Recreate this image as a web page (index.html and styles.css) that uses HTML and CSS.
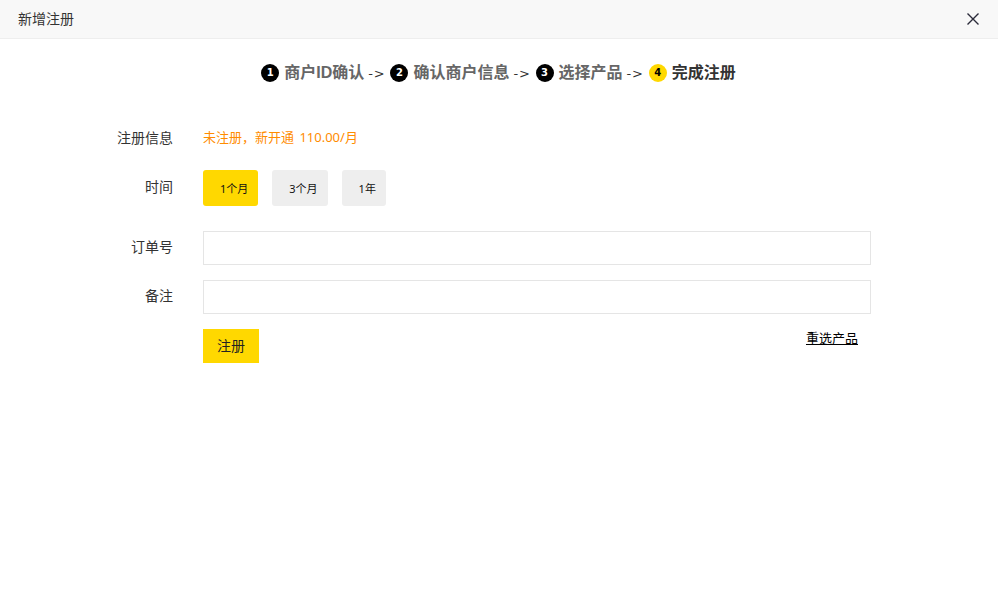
FILE: index.html
```html
<!DOCTYPE html>
<html lang="en">
<head>
    <meta charset="UTF-8">
    <meta name="viewport" content="width=device-width, initial-scale=1.0">
    <title>新增注册</title>
    <link rel="stylesheet" href="styles.css">
</head>
<body>
    <div class="header">
        <span class="header-title">新增注册</span>
        <button class="close-btn" aria-label="关闭">
            <svg width="14" height="14" viewBox="0 0 14 14"><path d="M1.5 1.5 L12.5 12.5 M12.5 1.5 L1.5 12.5" stroke="#2b2b3a" stroke-width="1.4" fill="none"/></svg>
        </button>
    </div>
    <div class="steps">
        <span class="step-num">1</span><span class="step-name">商户ID确认</span><span class="step-arrow">-&gt;</span>
        <span class="step-num">2</span><span class="step-name">确认商户信息</span><span class="step-arrow">-&gt;</span>
        <span class="step-num">3</span><span class="step-name">选择产品</span><span class="step-arrow">-&gt;</span>
        <span class="step-num current">4</span><span class="step-name current">完成注册</span>
    </div>
    <div class="form">
        <div class="row row-info">
            <label class="row-label">注册信息</label>
            <span class="price">未注册，新开通 110.00/月</span>
        </div>
        <div class="row row-time">
            <label class="row-label">时间</label>
            <div class="options">
                <span class="option selected">1个月</span>
                <span class="option">3个月</span>
                <span class="option">1年</span>
            </div>
        </div>
        <div class="row row-input">
            <label class="row-label">订单号</label>
            <input class="text-input" type="text">
        </div>
        <div class="row row-input">
            <label class="row-label">备注</label>
            <input class="text-input" type="text">
        </div>
        <div class="row row-actions">
            <button class="submit-btn">注册</button>
            <a class="reselect" href="#">重选产品</a>
        </div>
    </div>
</body>
</html>
```

FILE: styles.css
```css
* { box-sizing: border-box; }
body {
    margin: 0;
    background: #fff;
    color: #333;
    font-family: "Noto Sans", "Noto Sans CJK SC", sans-serif;
    font-size: 14px;
}
.header {
    height: 39px;
    display: flex;
    align-items: center;
    justify-content: space-between;
    padding: 0 18px;
    background: #f8f8f8;
    border-bottom: 1px solid #eee;
}
.header-title {
    color: #333;
    line-height: 38px;
}
.close-btn {
    display: flex;
    padding: 0;
    border: none;
    background: none;
    cursor: pointer;
}
.steps {
    display: flex;
    align-items: center;
    justify-content: center;
    height: 24px;
    margin-top: 22px;
    padding-right: 1px;
}
.step-num {
    width: 18px;
    height: 18px;
    margin-right: 5px;
    border-radius: 50%;
    background: #000;
    color: #fff;
    font-family: "DejaVu Sans", sans-serif;
    font-size: 10px;
    font-weight: bold;
    line-height: 18px;
    text-align: center;
}
.step-num.current {
    background: #ffd800;
    color: #000;
}
.step-name {
    color: #666;
    font-family: "Liberation Sans", "Noto Sans CJK SC", sans-serif;
    font-size: 16px;
    font-weight: bold;
    line-height: 22px;
}
.step-name.current { color: #333; }
.step-arrow {
    margin: 0 5px 0 4px;
    color: #333;
    font-family: "DejaVu Sans", sans-serif;
    font-size: 13px;
    letter-spacing: 0.8px;
}
.form {
    width: 871px;
    margin-top: 41px;
}
.row {
    display: flex;
    align-items: center;
}
.row-label {
    width: 173px;
    margin-right: 30px;
    text-align: right;
}
.row-info {
    height: 24px;
    padding-bottom: 2px;
}
.price {
    margin-bottom: 2px;
    color: #ff8c00;
    font-size: 13px;
    word-spacing: 2px;
}
.row-time {
    height: 36px;
    margin-top: 20px;
}
.row-time .row-label { padding-bottom: 4px; }
.options {
    display: flex;
    gap: 14px;
}
.option {
    height: 36px;
    padding: 0 10px 0 17px;
    border-radius: 3px;
    background: #eee;
    color: #111;
    font-size: 11px;
    line-height: 38px;
}
.option.selected { background: #ffd800; }
.row-input {
    height: 34px;
    margin-top: 15px;
}
.row-time + .row-input { margin-top: 25px; }
.row-input .row-label { padding-bottom: 5px; }
.text-input {
    flex: 1;
    height: 34px;
    border: 1px solid #e5e5e5;
    background: #fff;
}
.row-actions {
    align-items: flex-start;
    justify-content: space-between;
    margin-top: 15px;
    padding: 0 13px 0 203px;
}
.submit-btn {
    width: 56px;
    height: 34px;
    padding: 0 0 2px;
    border: none;
    background: #ffd800;
    color: #222;
    font-family: inherit;
    font-size: 14px;
    cursor: pointer;
}
.reselect {
    color: #000;
    font-size: 13px;
    line-height: 18px;
}
```
